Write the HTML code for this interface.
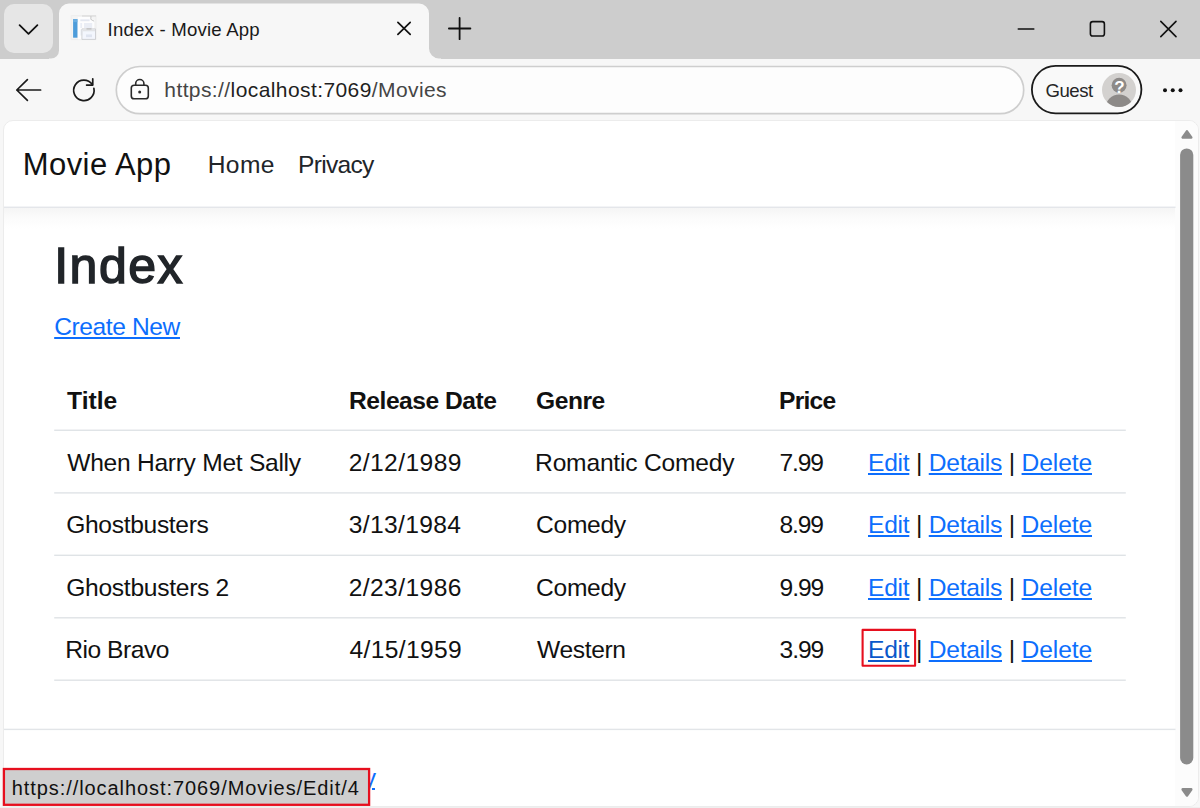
<!DOCTYPE html>
<html lang="en">
<head>
<meta charset="utf-8">
<title>Index - Movie App</title>
<style>
html,body{margin:0;padding:0;background:#f7f7f7;}
body{width:1200px;height:808px;overflow:hidden;font-family:"Liberation Sans",sans-serif;}
#root{position:relative;width:1200px;height:808px;overflow:hidden;background:#f7f7f7;}
#root *{box-sizing:border-box;}
.abs{position:absolute;}
.t{position:absolute;white-space:nowrap;font-family:"Liberation Sans",sans-serif;z-index:5;}
.u{text-decoration:underline;text-decoration-thickness:2px;text-underline-offset:2.4px;}
#tabstrip{left:0;top:0;width:1200px;height:58.5px;background:#cdcdcd;}
#ddbtn{left:3.5px;top:4px;width:49.5px;height:48.5px;border-radius:10px;background:#e6e6e6;}
#page{left:3px;top:120px;width:1196px;height:686.5px;border-radius:10px 10px 10px 10px;background:#fff;border:1px solid #ececec;overflow:hidden;}
#belowpage{left:0;top:806.5px;width:1200px;height:3px;background:#efefef;}
#track{left:1171px;top:0;width:24px;height:687px;background:#fcfcfc;}
#navshadow{left:0;top:87px;width:1172px;height:21px;background:linear-gradient(#f5f5f5,#fbfbfb 45%,#fff);}
svg#icons{position:absolute;left:0;top:0;z-index:7;}
svg#lines{position:absolute;left:0;top:0;z-index:2;}
svg#statussvg{position:absolute;left:0;top:0;z-index:9;}
.grp{display:contents;}
h1.t{margin:0;font-weight:400;}
a.t{cursor:pointer;}

</style>
</head>
<body>
<div id="root">
<div class="abs" id="tabstrip"></div>
<div class="abs" id="ddbtn"></div>
<svg class="abs" id="tabshape" width="1200" height="60" viewBox="0 0 1200 60" style="left:0;top:0">
<path d="M49 58.5 H51 A8 8 0 0 0 59 50.5 V13.5 A10 10 0 0 1 69 3.5 H419 A10 10 0 0 1 429 13.5 V48.5 A10 10 0 0 0 439 58.5 H441 V60 H49 Z" fill="#f7f7f7"/>
</svg>
<svg class="abs" id="pills" width="1200" height="130" viewBox="0 0 1200 130" style="left:0;top:0" fill="none">
<rect x="116.3" y="66.5" width="907.4" height="47.2" rx="23.6" fill="#fdfdfd" stroke="#cecece" stroke-width="1.7"/>
<rect x="1031.9" y="65.9" width="109.5" height="47.4" rx="23.7" fill="#f9f9f9" stroke="#1b1b1b" stroke-width="1.8"/>
</svg>
<div class="abs" id="belowpage"></div>

<div class="abs" id="page">
<div class="abs" id="navshadow"></div>
<div class="abs" id="track"></div>
</div>
<svg id="lines" width="1200" height="808" viewBox="0 0 1200 808" fill="none">
<rect x="4" y="206.6" width="1171.5" height="1.3" fill="#e1e4e8"/>
<rect x="54.2" y="429.55" width="1071.6" height="1.4" fill="#dfe3e6"/>
<rect x="54.2" y="492.2" width="1071.6" height="1.4" fill="#dfe3e6"/>
<rect x="54.2" y="554.6" width="1071.6" height="1.4" fill="#dfe3e6"/>
<rect x="54.2" y="617.1" width="1071.6" height="1.4" fill="#dfe3e6"/>
<rect x="54.2" y="679.5" width="1071.6" height="1.4" fill="#dfe3e6"/>
<rect x="4" y="728.7" width="1171.5" height="1.4" fill="#e2e5e8"/>
</svg>
<svg id="statussvg" width="1200" height="808" viewBox="0 0 1200 808" fill="none">
<rect x="3.9" y="769" width="365.2" height="35.8" fill="#cfcfcf" stroke="#e60f1e" stroke-width="2.3"/>
</svg>
<svg id="icons" width="1200" height="808" viewBox="0 0 1200 808" fill="none" stroke-linecap="round" stroke-linejoin="round">
<!-- red highlight box -->
<rect x="862.6" y="629.9" width="52.5" height="35.9" stroke="#e60f1e" stroke-width="2.1"/>
<!-- tab dropdown chevron -->
<path d="M19.6 25.2 L28.5 33.8 L37.4 25.2" stroke="#111" stroke-width="1.8"/>
<!-- favicon -->
<g id="favicon">
<rect x="71.6" y="15.6" width="24.4" height="24" fill="#f4f4f4" stroke="#ebebeb" stroke-width="0.8"/>
<path d="M82 16 H96" stroke="#d2d2d2" stroke-width="0.9" stroke-linecap="butt"/>
<rect x="73.1" y="19.1" width="4.4" height="18.6" fill="#4d9cda" stroke="none"/>
<rect x="73.1" y="19.1" width="4.4" height="3" fill="#6aaee2" stroke="none"/>
<path d="M77.9 17 H90.6 L94.1 20.6 V39.3 H77.9 Z" fill="#fdfdfe" stroke="none"/>
<path d="M90.9 16.2 V19.4 L94.1 21.2" stroke="#c0c0c0" stroke-width="0.9" stroke-linecap="butt"/>
<rect x="80.3" y="19.4" width="9.3" height="1.8" fill="#e3e7f0" stroke="none"/>
<rect x="80.3" y="23" width="1.8" height="5" fill="#eaedf5" stroke="none"/>
<rect x="84" y="23" width="8.2" height="5" fill="#eaedf5" stroke="none"/>
<rect x="80.3" y="29.5" width="1.8" height="6" fill="#eef1f7" stroke="none"/>
<rect x="82.3" y="28.9" width="13.2" height="10.5" fill="#f3f6fd" stroke="#c6c8cc" stroke-width="0.8"/>
<rect x="82.7" y="29.3" width="12.4" height="2" fill="#e2e3e6" stroke="none"/>
<path d="M86.5 28.9 H91.5" stroke="#a8a8a8" stroke-width="0.8" stroke-linecap="butt"/>
<rect x="86" y="34.4" width="6" height="2.8" fill="#dfe4f0" stroke="none"/>
</g>
<!-- tab close -->
<path d="M397.9 22.4 L410.2 34.4 M410.2 22.4 L397.9 34.4" stroke="#111" stroke-width="1.7"/>
<!-- new tab plus -->
<path d="M448.9 28.5 H470.4 M459.6 17.9 V39.2" stroke="#111" stroke-width="1.8"/>
<!-- window controls -->
<path d="M1018.3 29 H1033.8" stroke="#111" stroke-width="1.6"/>
<rect x="1090.4" y="21.6" width="14" height="14.4" rx="2.3" stroke="#111" stroke-width="1.6"/>
<path d="M1160.8 21.4 L1176 36.6 M1176 21.4 L1160.8 36.6" stroke="#111" stroke-width="1.6"/>
<!-- back -->
<path d="M16.8 90 H40.6 M27.4 79.6 L16.8 90 L27.4 100.4" stroke="#1b1b1b" stroke-width="1.7"/>
<!-- refresh -->
<path d="M93.9 88.4 A10.2 10.2 0 1 1 92.3 84.6" stroke="#1b1b1b" stroke-width="1.7"/>
<path d="M92.75 78.8 V85.1 H86.6" stroke="#1b1b1b" stroke-width="1.7"/>
<!-- lock -->
<rect x="131.3" y="85.3" width="17" height="13.4" rx="2.8" stroke="#2a2a2a" stroke-width="1.6"/>
<path d="M135.7 85 V83.6 A4.1 4.1 0 0 1 143.9 83.6 V85" stroke="#2a2a2a" stroke-width="1.6"/>
<circle cx="139.7" cy="92" r="1.5" fill="#2a2a2a" stroke="none"/>
<!-- avatar -->
<g id="avatar">
<clipPath id="avc"><circle cx="1119" cy="90" r="17"/></clipPath>
<circle cx="1119" cy="90" r="17" fill="#d3d1cf" stroke="none"/>
<g clip-path="url(#avc)" stroke="none">
<ellipse cx="1119.1" cy="108" rx="13.6" ry="13.6" fill="#8d8a88"/>
<circle cx="1119.1" cy="85.2" r="7.5" fill="#8d8a88"/>
</g>
</g>
<!-- more dots -->
<circle cx="1165" cy="90.3" r="2" fill="#111" stroke="none"/>
<circle cx="1172.75" cy="90.3" r="2" fill="#111" stroke="none"/>
<circle cx="1180.5" cy="90.3" r="2" fill="#111" stroke="none"/>
<!-- scrollbar -->
<path d="M1182.7 137.5 H1191.2 L1186.95 131.4 Z" fill="#8b8b8b" stroke="#8b8b8b" stroke-width="2.6" stroke-linejoin="round"/>
<rect x="1180.1" y="148.4" width="13.2" height="616" rx="6.6" fill="#8b8b8b" stroke="none"/>
<path d="M1182.7 789.4 H1191.2 L1186.95 795.5 Z" fill="#8b8b8b" stroke="#8b8b8b" stroke-width="2.6" stroke-linejoin="round"/>
</svg>
<span class="t" id="avq" style="left:1114.2px;top:78.6px;font-size:17px;line-height:17px;font-weight:700;color:#fff;z-index:8;">?</span>

<div class="grp" id="browser-ui">
<span class="t" id="tabtitle" style="left:107.58px;top:21px;font-size:18.6px;line-height:18.6px;color:#1a1a1a;letter-spacing:0.200px;">Index - Movie App</span>
<span class="t" id="url" style="left:164.31px;top:79px;font-size:21px;line-height:21px;color:#1f1f1f;letter-spacing:0.408px;"><span style="color:#454545">https://</span>localhost:7069<span style="color:#454545">/Movies</span></span>
<span class="t" id="guest" style="left:1045.53px;top:82px;font-size:18.6px;line-height:18.6px;color:#262626;letter-spacing:-0.510px;">Guest</span>
</div>
<header class="grp"><nav class="grp">
<a class="t" id="brand" style="left:22.70px;top:149px;font-size:31px;line-height:31px;color:#111;letter-spacing:0.440px;">Movie App</a>
<a class="t" id="home" style="left:207.79px;top:153px;font-size:24.6px;line-height:24.6px;color:#212529;letter-spacing:0.330px;">Home</a>
<a class="t" id="privacy" style="left:298.09px;top:153px;font-size:24.6px;line-height:24.6px;color:#212529;letter-spacing:-0.745px;">Privacy</a>
</nav></header>
<main class="grp">
<h1 class="t" id="h1" style="left:54.24px;top:241px;font-size:50px;line-height:50px;color:#212529;letter-spacing:1.487px;-webkit-text-stroke:1.5px #212529;">Index</h1>
<p class="grp"><a class="t u" id="create" style="left:54.20px;top:315px;font-size:24.6px;line-height:24.6px;color:#0d6efd;letter-spacing:-0.406px;">Create New</a></p>
<table class="grp"><thead class="grp"><tr class="grp">
<th class="grp"><span class="t" id="thTitle" style="left:67.03px;top:389px;font-size:24.6px;line-height:24.6px;color:#111;font-weight:700;letter-spacing:0.039px;">Title</span></th>
<th class="grp"><span class="t" id="thDate" style="left:349.09px;top:389px;font-size:24.6px;line-height:24.6px;color:#111;font-weight:700;letter-spacing:-0.486px;">Release Date</span></th>
<th class="grp"><span class="t" id="thGenre" style="left:536.09px;top:389px;font-size:24.6px;line-height:24.6px;color:#111;font-weight:700;letter-spacing:-0.496px;">Genre</span></th>
<th class="grp"><span class="t" id="thPrice" style="left:779.09px;top:389px;font-size:24.6px;line-height:24.6px;color:#111;font-weight:700;letter-spacing:-0.792px;">Price</span></th>
<th class="grp"></th></tr></thead><tbody class="grp">
<tr class="grp">
<td class="grp"><span class="t" id="r0t" style="left:67.23px;top:451px;font-size:24.6px;line-height:24.6px;color:#111;letter-spacing:-0.278px;">When Harry Met Sally</span></td>
<td class="grp"><span class="t" id="r0d" style="left:348.64px;top:451px;font-size:24.6px;line-height:24.6px;color:#111;letter-spacing:0.428px;">2/12/1989</span></td>
<td class="grp"><span class="t" id="r0g" style="left:535.09px;top:451px;font-size:24.6px;line-height:24.6px;color:#111;letter-spacing:-0.199px;">Romantic Comedy</span></td>
<td class="grp"><span class="t" id="r0p" style="left:779.53px;top:451px;font-size:24.6px;line-height:24.6px;color:#111;letter-spacing:-1.144px;">7.99</span></td>
<td class="grp"><a class="t u" id="r0e" style="left:868.00px;top:451px;font-size:24.6px;line-height:24.6px;color:#0d6efd;letter-spacing:-0.273px;">Edit</a><span class="t" id="r0b1" style="left:915.94px;top:451px;font-size:24.6px;line-height:24.6px;color:#111;">|</span><a class="t u" id="r0de" style="left:928.75px;top:451px;font-size:24.6px;line-height:24.6px;color:#0d6efd;letter-spacing:-0.277px;">Details</a><span class="t" id="r0b2" style="left:1008.84px;top:451px;font-size:24.6px;line-height:24.6px;color:#111;">|</span><a class="t u" id="r0dl" style="left:1021.60px;top:451px;font-size:24.6px;line-height:24.6px;color:#0d6efd;letter-spacing:-0.116px;">Delete</a></td>
</tr>
<tr class="grp">
<td class="grp"><span class="t" id="r1t" style="left:66.23px;top:513px;font-size:24.6px;line-height:24.6px;color:#111;letter-spacing:-0.328px;">Ghostbusters</span></td>
<td class="grp"><span class="t" id="r1d" style="left:348.66px;top:513px;font-size:24.6px;line-height:24.6px;color:#111;letter-spacing:0.361px;">3/13/1984</span></td>
<td class="grp"><span class="t" id="r1g" style="left:536.03px;top:513px;font-size:24.6px;line-height:24.6px;color:#111;letter-spacing:-0.286px;">Comedy</span></td>
<td class="grp"><span class="t" id="r1p" style="left:779.57px;top:513px;font-size:24.6px;line-height:24.6px;color:#111;letter-spacing:-1.135px;">8.99</span></td>
<td class="grp"><a class="t u" id="r1e" style="left:868.00px;top:513px;font-size:24.6px;line-height:24.6px;color:#0d6efd;letter-spacing:-0.273px;">Edit</a><span class="t" id="r1b1" style="left:915.94px;top:513px;font-size:24.6px;line-height:24.6px;color:#111;">|</span><a class="t u" id="r1de" style="left:928.75px;top:513px;font-size:24.6px;line-height:24.6px;color:#0d6efd;letter-spacing:-0.277px;">Details</a><span class="t" id="r1b2" style="left:1008.84px;top:513px;font-size:24.6px;line-height:24.6px;color:#111;">|</span><a class="t u" id="r1dl" style="left:1021.60px;top:513px;font-size:24.6px;line-height:24.6px;color:#0d6efd;letter-spacing:-0.116px;">Delete</a></td>
</tr>
<tr class="grp">
<td class="grp"><span class="t" id="r2t" style="left:66.23px;top:576px;font-size:24.6px;line-height:24.6px;color:#111;letter-spacing:-0.287px;">Ghostbusters 2</span></td>
<td class="grp"><span class="t" id="r2d" style="left:348.64px;top:576px;font-size:24.6px;line-height:24.6px;color:#111;letter-spacing:0.428px;">2/23/1986</span></td>
<td class="grp"><span class="t" id="r2g" style="left:536.03px;top:576px;font-size:24.6px;line-height:24.6px;color:#111;letter-spacing:-0.286px;">Comedy</span></td>
<td class="grp"><span class="t" id="r2p" style="left:779.56px;top:576px;font-size:24.6px;line-height:24.6px;color:#111;letter-spacing:-1.081px;">9.99</span></td>
<td class="grp"><a class="t u" id="r2e" style="left:868.00px;top:576px;font-size:24.6px;line-height:24.6px;color:#0d6efd;letter-spacing:-0.273px;">Edit</a><span class="t" id="r2b1" style="left:915.94px;top:576px;font-size:24.6px;line-height:24.6px;color:#111;">|</span><a class="t u" id="r2de" style="left:928.75px;top:576px;font-size:24.6px;line-height:24.6px;color:#0d6efd;letter-spacing:-0.277px;">Details</a><span class="t" id="r2b2" style="left:1008.84px;top:576px;font-size:24.6px;line-height:24.6px;color:#111;">|</span><a class="t u" id="r2dl" style="left:1021.60px;top:576px;font-size:24.6px;line-height:24.6px;color:#0d6efd;letter-spacing:-0.116px;">Delete</a></td>
</tr>
<tr class="grp">
<td class="grp"><span class="t" id="r3t" style="left:65.29px;top:638px;font-size:24.6px;line-height:24.6px;color:#111;letter-spacing:-0.482px;">Rio Bravo</span></td>
<td class="grp"><span class="t" id="r3d" style="left:349.60px;top:638px;font-size:24.6px;line-height:24.6px;color:#111;letter-spacing:0.327px;">4/15/1959</span></td>
<td class="grp"><span class="t" id="r3g" style="left:537.03px;top:638px;font-size:24.6px;line-height:24.6px;color:#111;letter-spacing:-0.362px;">Western</span></td>
<td class="grp"><span class="t" id="r3p" style="left:779.56px;top:638px;font-size:24.6px;line-height:24.6px;color:#111;letter-spacing:-1.080px;">3.99</span></td>
<td class="grp"><a class="t u" id="r3e" style="left:868.00px;top:638px;font-size:24.6px;line-height:24.6px;color:#0a58ca;letter-spacing:-0.273px;">Edit</a><span class="t" id="r3b1" style="left:915.94px;top:638px;font-size:24.6px;line-height:24.6px;color:#111;">|</span><a class="t u" id="r3de" style="left:928.75px;top:638px;font-size:24.6px;line-height:24.6px;color:#0d6efd;letter-spacing:-0.277px;">Details</a><span class="t" id="r3b2" style="left:1008.84px;top:638px;font-size:24.6px;line-height:24.6px;color:#111;">|</span><a class="t u" id="r3dl" style="left:1021.60px;top:638px;font-size:24.6px;line-height:24.6px;color:#0d6efd;letter-spacing:-0.116px;">Delete</a></td>
</tr>
</tbody></table>
</main>
<footer class="grp"><span class="t" id="foot1" style="left:54.01px;top:766px;font-size:24.6px;line-height:24.6px;color:#6c757d;letter-spacing:0.113px;">© 2022 - Movie App -</span><a class="t u" id="foot2" style="left:301.00px;top:766px;font-size:24.6px;line-height:24.6px;color:#0d6efd;letter-spacing:-0.949px;">Privacy</a></footer>
<div class="grp" id="statusbar"><span class="t" id="status" style="left:11.71px;top:778px;font-size:20px;line-height:20px;color:#111;letter-spacing:0.929px;z-index:10;">https://localhost:7069/Movies/Edit/4</span></div>
</div>
</body>
</html>
